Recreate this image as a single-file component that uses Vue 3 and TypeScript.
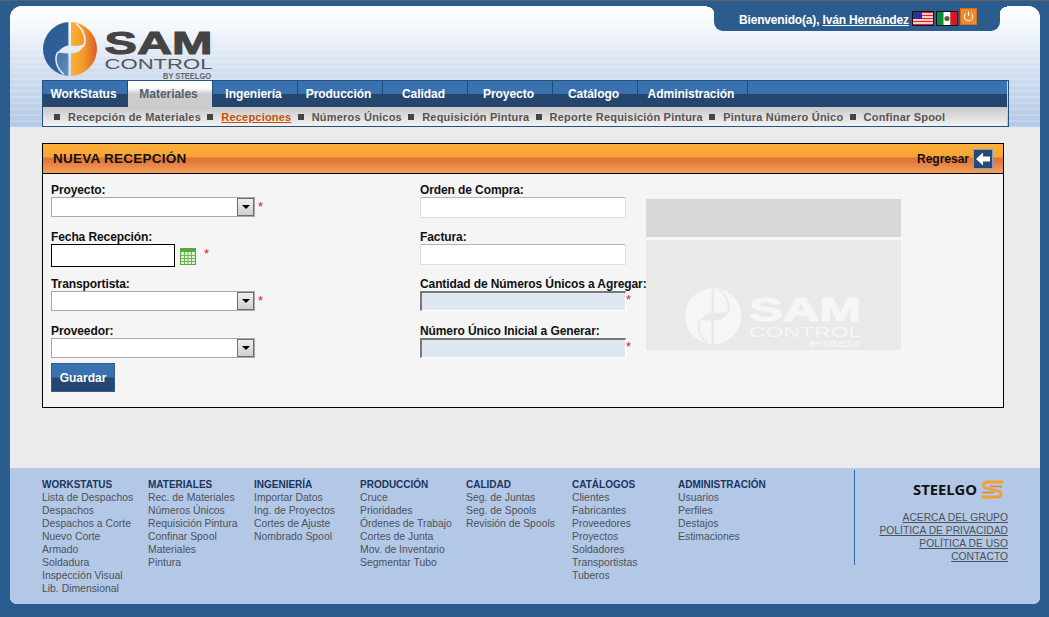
<script setup lang="ts">
const tabs: string[] = ['WorkStatus', 'Materiales', 'Ingeniería', 'Producción', 'Calidad', 'Proyecto', 'Catálogo', 'Administración']
const subs: string[] = ['Recepción de Materiales', 'Recepciones', 'Números Únicos', 'Requisición Pintura', 'Reporte Requisición Pintura', 'Pintura Número Único', 'Confinar Spool']
const leftFields = [
  { label: 'Proyecto:', kind: 'select', req: true },
  { label: 'Fecha Recepción:', kind: 'date', req: true },
  { label: 'Transportista:', kind: 'select', req: true },
  { label: 'Proveedor:', kind: 'select', req: false },
]
const rightFields = [
  { label: 'Orden de Compra:', disabled: false },
  { label: 'Factura:', disabled: false },
  { label: 'Cantidad de Números Únicos a Agregar:', disabled: true },
  { label: 'Número Único Inicial a Generar:', disabled: true },
]
const footer = [
  { title: 'WORKSTATUS', links: ['Lista de Despachos', 'Despachos', 'Despachos a Corte', 'Nuevo Corte', 'Armado', 'Soldadura', 'Inspección Visual', 'Lib. Dimensional'] },
  { title: 'MATERIALES', links: ['Rec. de Materiales', 'Números Únicos', 'Requisición Pintura', 'Confinar Spool', 'Materiales', 'Pintura'] },
  { title: 'INGENIERÍA', links: ['Importar Datos', 'Ing. de Proyectos', 'Cortes de Ajuste', 'Nombrado Spool'] },
  { title: 'PRODUCCIÓN', links: ['Cruce', 'Prioridades', 'Órdenes de Trabajo', 'Cortes de Junta', 'Mov. de Inventario', 'Segmentar Tubo'] },
  { title: 'CALIDAD', links: ['Seg. de Juntas', 'Seg. de Spools', 'Revisión de Spools'] },
  { title: 'CATÁLOGOS', links: ['Clientes', 'Fabricantes', 'Proveedores', 'Proyectos', 'Soldadores', 'Transportistas', 'Tuberos'] },
  { title: 'ADMINISTRACIÓN', links: ['Usuarios', 'Perfiles', 'Destajos', 'Estimaciones'] },
]
const legal: string[] = ['ACERCA DEL GRUPO', 'POLÍTICA DE PRIVACIDAD', 'POLÍTICA DE USO', 'CONTACTO']
</script>

<template>
  <div class="page">
    <div class="shell">
      <header class="head">
        <div class="welcome">
          <span class="hello">Bienvenido(a), <a class="who">Iván Hernández</a></span>
          <svg class="flag" viewBox="0 0 22 15" width="22" height="15">
            <rect width="22" height="15" fill="#fff" />
            <path d="M0 1.5h22M0 4.5h22M0 7.5h22M0 10.5h22M0 13.5h22" stroke="#e2242c" stroke-width="1.4" />
            <rect width="10" height="8" fill="#2b2f9e" />
            <rect x=".5" y=".5" width="21" height="14" fill="none" stroke="#111" />
          </svg>
          <svg class="flag" viewBox="0 0 22 15" width="22" height="15">
            <rect width="7.5" height="15" fill="#0a8a3c" />
            <rect x="7.5" width="7" height="15" fill="#fff" />
            <rect x="14.5" width="7.5" height="15" fill="#e8101c" />
            <circle cx="11" cy="7.5" r="2.6" fill="#6a5a3a" />
            <rect x=".5" y=".5" width="21" height="14" fill="none" stroke="#111" />
          </svg>
          <svg class="power" viewBox="0 0 17 17" width="17" height="17">
            <rect x=".5" y=".5" width="16" height="16" fill="#ee8a2e" stroke="#d06f1e" />
            <path d="M6 5.2a4.2 4.2 0 1 0 5 0" fill="none" stroke="#fff" stroke-width="1" />
            <path d="M8.5 3.5v4.5" stroke="#fff" stroke-width="1" />
          </svg>
        </div>

        <svg class="logo" viewBox="0 0 190 62" width="190" height="62">
          <defs>
            <linearGradient id="gBlue" x1="0" y1="0" x2="1" y2="1">
              <stop offset="0" stop-color="#2a5a92" />
              <stop offset=".7" stop-color="#2f6299" />
              <stop offset="1" stop-color="#6d93bb" />
            </linearGradient>
            <linearGradient id="gOrange" x1="0" y1="0" x2="1" y2="0">
              <stop offset="0" stop-color="#fbb233" />
              <stop offset=".5" stop-color="#f39a2c" />
              <stop offset="1" stop-color="#de5a28" />
            </linearGradient>
            <mask id="cut">
              <rect width="60" height="60" fill="#fff" />
              <rect x="25.4" y="0" width="2.6" height="60" fill="#000" />
              <path d="M14 31C19 25 23 23.5 27 23.5C31 23.5 36 25 41 22C39 29 34 31.5 27 31.5C22 31.5 18 30 14 31Z" fill="#000" />
              <path d="M15 30C11 36 13 46 21 52.5" fill="none" stroke="#000" stroke-width="1.6" />
              <path d="M40 25C44 19 42 9 33 1.5" fill="none" stroke="#000" stroke-width="1.6" />
            </mask>
          </defs>
          <g transform="translate(1 1)" mask="url(#cut)">
            <path d="M27 0A27 27 0 0 0 27 54Z" fill="url(#gBlue)" />
            <path d="M15 30C12 37 14 46 21 52L26 54V31Z" fill="#6a90bb" opacity=".55" />
            <path d="M27 0A27 27 0 0 1 27 54Z" fill="url(#gOrange)" />
          </g>
          <text class="lg-sam" x="62.5" y="33" textLength="108" lengthAdjust="spacingAndGlyphs">SAM</text>
          <text class="lg-ctl" x="62.5" y="48" textLength="108" lengthAdjust="spacingAndGlyphs">CONTROL</text>
          <text class="lg-by" x="121" y="58" textLength="48" lengthAdjust="spacingAndGlyphs">BY STEELGO</text>
        </svg>

        <nav class="nav">
          <div class="tabs">
            <a v-for="(t, i) in tabs" :key="t" class="tab" :class="{ on: i === 1, wide: i === 7 }">{{ t }}</a>
          </div>
          <div class="subs">
            <span v-for="(s, i) in subs" :key="s" class="sub">
              <i class="dot"></i><a :class="{ cur: i === 1 }">{{ s }}</a>
            </span>
          </div>
        </nav>
      </header>

      <main class="content">
        <section class="panel">
          <div class="panel-head">
            <h1>NUEVA RECEPCIÓN</h1>
            <a class="back">
              Regresar
              <svg viewBox="0 0 20 20" width="20" height="20">
                <rect x=".5" y=".5" width="19" height="19" fill="#234a78" stroke="#7aa3d0" />
                <path d="M3 10L10 3.5V7.5H17V12.5H10V16.5Z" fill="#fff" />
              </svg>
            </a>
          </div>
          <div class="panel-body">
            <div class="col-l">
              <div v-for="f in leftFields" :key="f.label" class="field">
                <label>{{ f.label }}</label>
                <div class="ctl">
                  <div v-if="f.kind === 'select'" class="combo">
                    <span class="combo-btn"><i></i></span>
                  </div>
                  <template v-else>
                    <input class="date" type="text" />
                    <svg class="cal" viewBox="0 0 16 17" width="16" height="17">
                      <rect x=".5" y=".5" width="15" height="16" fill="#e2f1d8" stroke="#5aa63f" />
                      <rect x="1" y="1" width="14" height="3" fill="#5aa63f" />
                      <path d="M1 7.5h14M1 10.5h14M1 13.5h14M4.5 4v12M8 4v12M11.5 4v12" stroke="#6db455" stroke-width="1" />
                    </svg>
                  </template>
                  <span v-if="f.req" class="req" :class="{ far: f.kind === 'date' }">*</span>
                </div>
              </div>
              <button class="save" type="button">Guardar</button>
            </div>
            <div class="col-r">
              <div v-for="f in rightFields" :key="f.label" class="field">
                <label>{{ f.label }}</label>
                <div class="ctl">
                  <input class="txt" :class="{ off: f.disabled }" type="text" />
                  <span v-if="f.disabled" class="req tight">*</span>
                </div>
              </div>
            </div>
            <div class="col-img">
              <div class="img-top"></div>
              <div class="img-bot">
                <svg class="logo-w" viewBox="0 0 190 62" width="197.7" height="64.5">
                  <g transform="translate(1 1)" mask="url(#cut)">
                    <circle cx="27" cy="27" r="27" fill="#f6f6f6" />
                  </g>
                  <text class="lg-sam w" x="62.5" y="33" textLength="108" lengthAdjust="spacingAndGlyphs">SAM</text>
                  <text class="lg-ctl w" x="62.5" y="48" textLength="108" lengthAdjust="spacingAndGlyphs">CONTROL</text>
                  <text class="lg-by w" x="121" y="58" textLength="48" lengthAdjust="spacingAndGlyphs">BY STEELGO</text>
                </svg>
              </div>
            </div>
          </div>
        </section>
      </main>

      <footer class="foot">
        <div class="foot-cols">
          <div v-for="c in footer" :key="c.title" class="fcol">
            <h4>{{ c.title }}</h4>
            <a v-for="l in c.links" :key="l">{{ l }}</a>
          </div>
        </div>
        <aside class="foot-side">
          <svg class="steelgo" viewBox="0 0 92 21" width="92" height="21">
            <text x="1" y="16" class="st-txt" textLength="64" lengthAdjust="spacingAndGlyphs">STEELGO</text>
            <path d="M91 3H76C71 3 70 8 74 9L86 12C91 13.5 90 18 85 18H70" fill="none" stroke="#f5a02c" stroke-width="2.8" />
            <path d="M90 7.5H78M70 13.5H82" fill="none" stroke="#ea7f2a" stroke-width="1.4" />
          </svg>
          <a v-for="l in legal" :key="l">{{ l }}</a>
        </aside>
      </footer>
    </div>
  </div>
</template>

<style>
html, body { margin: 0; background: #2b5c8e; }
</style>

<style scoped>
.page {
  box-sizing: border-box;
  width: 1049px;
  height: 617px;
  padding: 5px 9px 13px 10px;
  border-top: 1px solid #5c6068;
  background: #2b5c8e;
  font-family: "Liberation Sans", Arial, sans-serif;
  overflow: hidden;
}
.shell {
  display: flex;
  flex-direction: column;
  height: 100%;
  border-radius: 12px 12px 7px 7px;
  overflow: hidden;
  background: #ebebeb;
}
.head {
  position: relative;
  height: 121px;
  padding: 15px 0 0 32px;
  box-sizing: border-box;
  background:
    repeating-linear-gradient(180deg, rgba(255, 255, 255, .16) 0 2px, rgba(255, 255, 255, 0) 2px 6px),
    linear-gradient(180deg, #fff 0, #f4f7fc 18%, #d5e0f1 50%, #b3c8e6 100%);
}
.logo { display: block; margin-bottom: -3px; }
.lg-sam { font: 700 32px "Liberation Sans", sans-serif; fill: #444; stroke: #444; stroke-width: 1px; }
.lg-ctl { font: 400 14px "Liberation Sans", sans-serif; fill: #555; }
.lg-by { font: 700 9.5px "Liberation Sans", sans-serif; fill: #666; }
.lg-sam.w { fill: #f6f6f6; stroke: #f6f6f6; }
.lg-ctl.w { fill: #f6f6f6; }
.lg-by.w { fill: #f6f6f6; }

.welcome {
  position: absolute;
  top: -6px;
  right: 40px;
  box-sizing: border-box;
  width: 286px;
  height: 31px;
  padding: 8px 0 0 25px;
  display: flex;
  align-items: flex-start;
  background: #2b5c8e;
  border-radius: 0 0 9px 9px;
  color: #fff;
  font-size: 12px;
  font-weight: 700;
}
.welcome::before,
.welcome::after {
  content: "";
  position: absolute;
  top: 6px;
  width: 7px;
  height: 8px;
}
.welcome::before { left: -7px; background: radial-gradient(circle at 0 100%, transparent 7px, #2b5c8e 7.5px); }
.welcome::after { right: -7px; background: radial-gradient(circle at 100% 100%, transparent 7px, #2b5c8e 7.5px); }
.hello { line-height: 26px; margin-top: -1px; white-space: nowrap; letter-spacing: -.17px; }
.who { text-decoration: underline; }
.flag { margin: 3px 2px 0 0; flex: none; }
.hello + .flag { margin-left: 3px; }
.power { flex: none; }

.nav {
  width: 967px;
  box-sizing: border-box;
  padding-right: 1px;
  border: 1px solid #24527f;
}
.tabs {
  display: flex;
  height: 26px;
  background: linear-gradient(180deg, #3a72b0 0, #3a72b0 48%, #24466f 50%, #24466f 100%);
}
.tab {
  box-sizing: border-box;
  width: 85px;
  padding-right: 3px;
  border-right: 1px solid #1f4b7a;
  color: #fff;
  font-size: 12px;
  font-weight: 700;
  line-height: 26px;
  text-align: center;
  letter-spacing: -.04px;
}
.tab.wide { width: 110px; }
.tab.on {
  color: #55606c;
  background: linear-gradient(180deg, #fff 0, #fff 25%, #ccc 52%, #ccc 100%);
}
.subs {
  display: flex;
  align-items: center;
  height: 19px;
  padding-left: 11px;
  background: linear-gradient(180deg, #c9c9c9 0, #f2f2f2 100%);
  font-size: 11px;
  font-weight: 700;
  color: #555;
  white-space: nowrap;
  letter-spacing: .2px;
}
.sub { display: inline-flex; align-items: center; margin-right: 6.3px; }
.dot { width: 6px; height: 6px; background: #444; margin-right: 8px; }
.cur { color: #c85000; text-decoration: underline; }

.content {
  flex: 1;
  padding: 16px 36px 0 32px;
}
.panel {
  box-sizing: border-box;
  height: 265px;
  border: 1px solid #000;
  background: #f5f5f5;
}
.panel-head {
  box-sizing: border-box;
  height: 30px;
  display: flex;
  align-items: center;
  justify-content: space-between;
  padding: 0 10px 0 10px;
  border-bottom: 1px solid #000;
  background: linear-gradient(180deg, #fbb03a 0, #f8a334 45%, #e0743a 48%, #e37a3e 60%, #f2a15a 100%);
}
.panel-head h1 { margin: 0; font-size: 13.5px; letter-spacing: .25px; font-weight: 700; color: #111; }
.back { display: flex; align-items: center; gap: 4px; font-size: 12px; font-weight: 700; color: #111; }
.back svg { display: block; }

.panel-body { display: flex; padding: 8px 0 0 8px; }
.col-l { width: 369px; flex: none; }
.col-r { width: 226px; flex: none; position: relative; z-index: 1; }
.field { height: 35px; margin-bottom: 12px; }
.col-l .field:nth-of-type(4) { margin-bottom: 5px; }
label {
  display: block;
  height: 15px;
  line-height: 17px;
  font-size: 12px;
  font-weight: 700;
  color: #111;
  white-space: nowrap;
  letter-spacing: -.1px;
}
.ctl { display: flex; align-items: flex-start; position: relative; }
.combo {
  position: relative;
  box-sizing: border-box;
  width: 204px;
  height: 20px;
  border: 1px solid #a6a8ae;
  background: #fff;
}
.combo-btn {
  position: absolute;
  right: 0;
  top: 0;
  box-sizing: border-box;
  width: 17px;
  height: 18px;
  border: 1px solid #6e6e6e;
  background: linear-gradient(180deg, #efefef, #cfcfcf);
  display: flex;
  align-items: center;
  justify-content: center;
}
.combo-btn i {
  width: 0;
  height: 0;
  border-left: 4px solid transparent;
  border-right: 4px solid transparent;
  border-top: 4px solid #000;
}
.req { color: #e8141c; font-size: 13px; font-weight: 400; line-height: 14px; margin: 3px 0 0 3px; }
.req.far { margin: 3px 0 0 8px; }
.req.tight { margin: 2px 0 0 0; }
.date {
  box-sizing: border-box;
  width: 124px;
  height: 23px;
  border: 1px solid #000;
  background: #fff;
  margin: 0;
  padding: 0;
}
.cal { margin: 4px 0 0 5px; flex: none; }
.txt {
  box-sizing: border-box;
  width: 206px;
  height: 21px;
  margin: 0;
  padding: 0;
  background: #fff;
  border: 1px solid #dcdce2;
  border-top-color: #b4b4b8;
  border-radius: 2px;
  outline: none;
}
.txt.off {
  height: 20px;
  background: #dfe7f2;
  border-radius: 0;
  border-style: solid;
  border-width: 2px 1px 1px 2px;
  border-color: #777 #fff #fff #777;
}
.col-img { width: 255px; flex: none; padding-top: 17px; }
.img-top { height: 38px; background: #d7d7d7; margin-bottom: 3px; }
.img-bot {
  box-sizing: border-box;
  height: 110px;
  padding: 0 0 0 38px;
  display: flex;
  align-items: flex-end;
  background: #e9e9e9;
}
.logo-w { display: block; margin-bottom: -1px; }
.save {
  display: block;
  width: 64px;
  height: 29px;
  padding: 0;
  border: 1px solid #2d5e95;
  background: linear-gradient(180deg, #3a72b0 0, #3a72b0 48%, #24466f 52%, #24466f 100%);
  color: #fff;
  font: 700 12px "Liberation Sans", Arial, sans-serif;
}

.foot {
  display: flex;
  height: 136px;
  box-sizing: border-box;
  padding-top: 2px;
  background: #b3c8e6;
}
.foot-cols { display: flex; width: 844px; padding: 8px 0 0 32px; box-sizing: border-box; flex: none; }
.fcol { width: 106px; flex: none; }
.fcol h4 { margin: 0; font-size: 10px; font-weight: 700; line-height: 13px; color: #1b3560; }
.fcol a { display: block; font-size: 10.4px; line-height: 13px; color: #4d5258; white-space: nowrap; }
.foot-side {
  box-sizing: border-box;
  flex: 1;
  height: 95px;
  border-left: 1px solid #2d6aa8;
  padding: 9px 32px 0 0;
  display: flex;
  flex-direction: column;
  align-items: flex-end;
}
.steelgo { display: block; margin: 0 4px 11px 0; }
.st-txt { font: 700 14px "Open Sans", "Liberation Sans", sans-serif; fill: #111; }
.foot-side a { font-size: 10.3px; line-height: 13px; color: #4d5258; text-decoration: underline; white-space: nowrap; }
</style>
